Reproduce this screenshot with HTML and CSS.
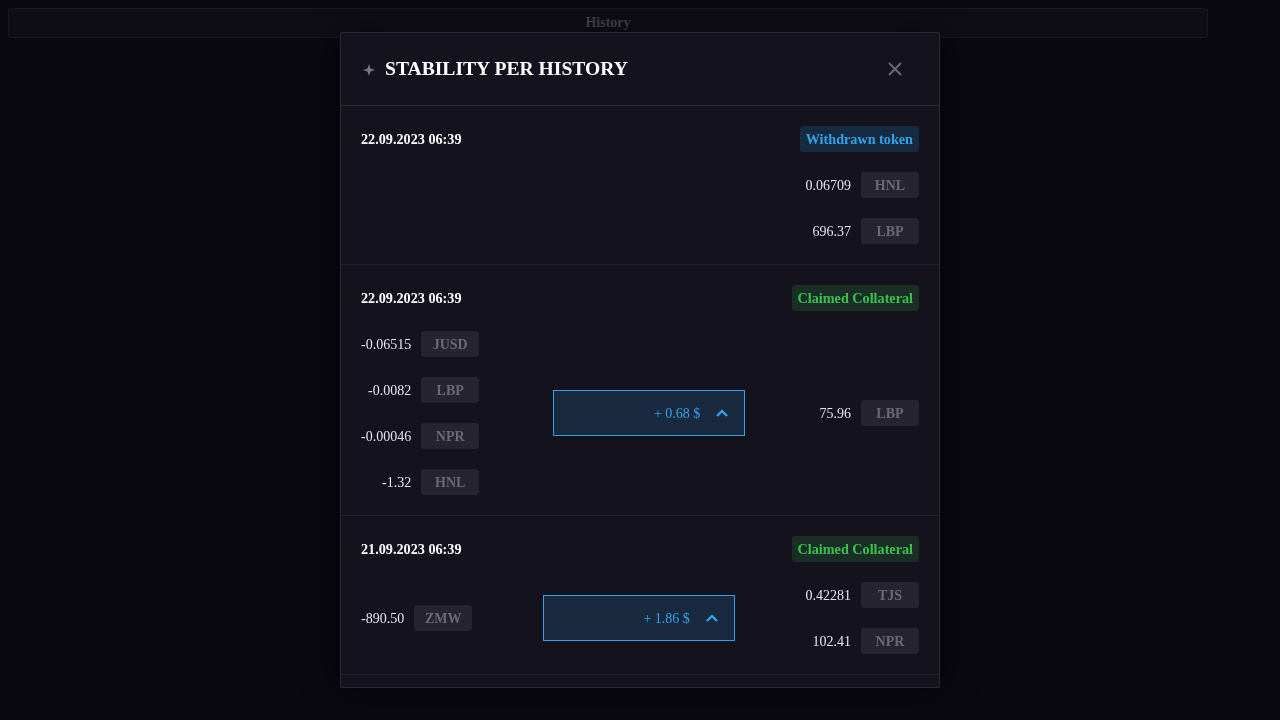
FILE: index.html
```html
<!DOCTYPE html>
<html>
<head>
<meta charset="utf-8">
<link rel="stylesheet" href="styles.css">
</head>
<body>
<div class="page">
  <div class="topbar">History</div>
</div>
<div class="overlay">
  <div class="modal">
    <div class="modal-head">
      <div class="title">
        <svg class="star" width="12" height="12" viewBox="0 0 12 12"><path d="M6 0 L7.5 4.5 L12 6 L7.5 7.5 L6 12 L4.5 7.5 L0 6 L4.5 4.5 Z" fill="#7a7682"/></svg>
        <span>STABILITY PER HISTORY</span>
      </div>
      <button class="close" aria-label="Close">
        <svg width="16" height="16" viewBox="0 0 16 16"><path d="M2 2 L14 14 M14 2 L2 14" stroke="#6a6672" stroke-width="2" fill="none"/></svg>
      </button>
    </div>
    <div class="modal-body">
      <div class="entry">
        <div class="entry-head">
          <span class="date">22.09.2023 06:39</span>
          <span class="badge blue">Withdrawn token</span>
        </div>
        <div class="entry-main end">
          <div class="tokens">
            <div class="tok"><span class="val">0.06709</span><span class="chip">HNL</span></div>
            <div class="tok"><span class="val">696.37</span><span class="chip">LBP</span></div>
          </div>
        </div>
      </div>
      <div class="entry">
        <div class="entry-head">
          <span class="date">22.09.2023 06:39</span>
          <span class="badge green">Claimed Collateral</span>
        </div>
        <div class="entry-main">
          <div class="tokens">
            <div class="tok"><span class="val">-0.06515</span><span class="chip">JUSD</span></div>
            <div class="tok"><span class="val">-0.0082</span><span class="chip">LBP</span></div>
            <div class="tok"><span class="val">-0.00046</span><span class="chip">NPR</span></div>
            <div class="tok"><span class="val">-1.32</span><span class="chip">HNL</span></div>
          </div>
          <div class="sum"><span>+ 0.68 $</span><svg width="14" height="10" viewBox="0 0 14 10"><path d="M2 8 L7 3 L12 8" stroke="#2ea3ec" stroke-width="2.4" fill="none"/></svg></div>
          <div class="tokens">
            <div class="tok"><span class="val">75.96</span><span class="chip">LBP</span></div>
          </div>
        </div>
      </div>
      <div class="entry">
        <div class="entry-head">
          <span class="date">21.09.2023 06:39</span>
          <span class="badge green">Claimed Collateral</span>
        </div>
        <div class="entry-main">
          <div class="tokens">
            <div class="tok"><span class="val">-890.50</span><span class="chip">ZMW</span></div>
          </div>
          <div class="sum"><span>+ 1.86 $</span><svg width="14" height="10" viewBox="0 0 14 10"><path d="M2 8 L7 3 L12 8" stroke="#2ea3ec" stroke-width="2.4" fill="none"/></svg></div>
          <div class="tokens">
            <div class="tok"><span class="val">0.42281</span><span class="chip">TJS</span></div>
            <div class="tok"><span class="val">102.41</span><span class="chip">NPR</span></div>
          </div>
        </div>
      </div>
      <div class="entry partial"></div>
    </div>
  </div>
</div>
</body>
</html>
```

FILE: styles.css
```css
html, body {
  margin: 0;
  padding: 0;
  height: 100%;
}
body {
  background: #0a0810;
  font-family: "Liberation Serif", "Times New Roman", serif;
  font-size: 14px;
  color: #e8e6ee;
  overflow: hidden;
}
.page {
  padding: 8px 72px 8px 8px;
}
.topbar {
  height: 28px;
  border: 1px solid #1a1820;
  border-radius: 3px;
  background: #0f0d15;
  color: #46424e;
  font-weight: bold;
  display: flex;
  align-items: center;
  justify-content: center;
}
.overlay {
  position: fixed;
  inset: 0;
  display: flex;
  justify-content: center;
  align-items: flex-start;
  padding-top: 32px;
}
.modal {
  width: 598px;
  height: 654px;
  background: #14121c;
  border: 1px solid #2b2935;
  border-radius: 2px;
  display: flex;
  flex-direction: column;
  overflow: hidden;
  box-shadow: 0 0 40px rgba(0,0,0,0.4);
}
.modal-head {
  height: 72px;
  border-bottom: 1px solid #2b2935;
  display: flex;
  align-items: center;
  justify-content: space-between;
  padding: 0 28px 0 22px;
  flex-shrink: 0;
}
.title {
  display: flex;
  align-items: center;
  gap: 10px;
  font-size: 19.6px;
  font-weight: bold;
  color: #ffffff;
}
.star { margin-top: 1px; }
.close {
  background: none;
  border: 0;
  padding: 0;
  width: 16px;
  height: 16px;
  display: flex;
  margin-right: 8px;
  cursor: pointer;
}
.modal-body {
  flex: 1;
  overflow: hidden;
}
.entry {
  padding: 20px 20px;
  border-bottom: 1px solid #211f29;
  display: flex;
  flex-direction: column;
  gap: 20px;
}
.entry.partial {
  height: 40px;
  padding: 0;
}
.entry-head {
  display: flex;
  justify-content: space-between;
  align-items: center;
  height: 26px;
}
.date {
  font-weight: bold;
  color: #ffffff;
  padding-top: 1px;
  font-size: 14.2px;
}
.badge {
  height: 26px;
  padding: 1px 6px 0;
  box-sizing: border-box;
  border-radius: 3px;
  font-weight: bold;
  font-size: 14.2px;
  display: flex;
  align-items: center;
}
.badge.blue { background: #162a40; color: #2ea3ec; }
.badge.green { background: #1a2e25; color: #37c24f; }
.entry-main {
  display: flex;
  justify-content: space-between;
  align-items: center;
}
.entry-main.end { justify-content: flex-end; }
.tokens {
  display: grid;
  grid-template-columns: auto auto;
  row-gap: 20px;
  column-gap: 10px;
  justify-items: end;
}
.tok { display: contents; }
.val {
  color: #e6e4ec;
  align-self: center;
  padding-top: 2px;
}
.chip {
  justify-self: start;
  min-width: 58px;
  box-sizing: border-box;
  height: 26px;
  padding: 2px 8px 0;
  border-radius: 3px;
  background: #26242e;
  color: #6c6876;
  font-weight: bold;
  display: flex;
  align-items: center;
  justify-content: center;
}
.sum {
  width: 175px;
  height: 44px;
  border: 1px solid #2ea3ec;
  background: #192a40;
  color: #2ea3ec;
  display: flex;
  align-items: center;
  justify-content: flex-end;
  gap: 15px;
  padding-right: 15px;
}
.sum span { padding-top: 2px; }
```
